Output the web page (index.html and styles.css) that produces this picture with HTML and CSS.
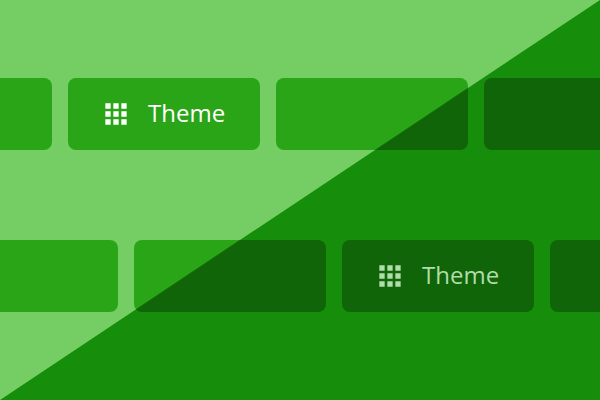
FILE: index.html
```html
<!DOCTYPE html>
<html lang="en">
<head>
<meta charset="utf-8">
<title>Theme</title>
<link rel="stylesheet" href="styles.css">
</head>
<body>
<main class="stage">
  <section class="scene scene-light">
    <div class="row row-first">
      <div class="tile"></div>
      <button type="button" class="tile">
        <svg class="icon" viewBox="0 0 24 24" aria-hidden="true"><path d="M4 8h4V4H4v4zm6 12h4v-4h-4v4zm-6 0h4v-4H4v4zm0-6h4v-4H4v4zm6 0h4v-4h-4v4zm6-10v4h4V4h-4zm-6 4h4V4h-4v4zm6 6h4v-4h-4v4zm0 6h4v-4h-4v4z"/></svg>
        <span class="label">Theme</span>
      </button>
      <div class="tile"></div>
      <div class="tile"></div>
    </div>
    <div class="row row-second">
      <div class="tile"></div>
      <div class="tile"></div>
      <div class="tile"></div>
      <div class="tile"></div>
    </div>
  </section>
  <section class="scene scene-dark">
    <div class="row row-first">
      <div class="tile"></div>
      <div class="tile"></div>
      <div class="tile"></div>
      <div class="tile"></div>
    </div>
    <div class="row row-second">
      <div class="tile"></div>
      <div class="tile"></div>
      <button type="button" class="tile">
        <svg class="icon" viewBox="0 0 24 24" aria-hidden="true"><path d="M4 8h4V4H4v4zm6 12h4v-4h-4v4zm-6 0h4v-4H4v4zm0-6h4v-4H4v4zm6 0h4v-4h-4v4zm6-10v4h4V4h-4zm-6 4h4V4h-4v4zm6 6h4v-4h-4v4zm0 6h4v-4h-4v4z"/></svg>
        <span class="label">Theme</span>
      </button>
      <div class="tile"></div>
    </div>
  </section>
</main>
</body>
</html>
```
FILE: styles.css
```css
* {
  box-sizing: border-box;
}

body {
  margin: 0;
  font-family: "Open Sans", "Noto Sans", sans-serif;
}

/* Both scenes share one grid cell; the dark one is cut along the diagonal. */
.stage {
  display: grid;
  min-height: 100vh;
  overflow: hidden;
}

.scene {
  grid-area: 1 / 1;
  min-width: 0;
  display: flex;
  flex-direction: column;
  gap: 90px;
  padding: 78px 0;
  overflow: hidden;
}

.scene-light {
  --tile: #2ba518;
  --ink: #ffffff;
  background: #75ce63;
}

.scene-dark {
  --tile: #0f6507;
  --ink: #b2dcaa;
  background: #178e0b;
  clip-path: polygon(100% 0, 100% 100%, 0 100%);
}

.row {
  display: flex;
  gap: 16px;
}

.row-first {
  margin-left: -140px;
}

.row-second {
  margin-left: -74px;
}

.tile {
  flex: 0 0 192px;
  height: 72px;
  display: flex;
  align-items: center;
  gap: 16px;
  padding: 0 32px;
  border: 0;
  border-radius: 8px;
  background: var(--tile);
  color: var(--ink);
  font: inherit;
  font-size: 24px;
  line-height: 32px;
}

.label {
  padding-bottom: 2px;
}

.icon {
  flex: none;
  width: 32px;
  height: 32px;
  fill: currentColor;
}
```
